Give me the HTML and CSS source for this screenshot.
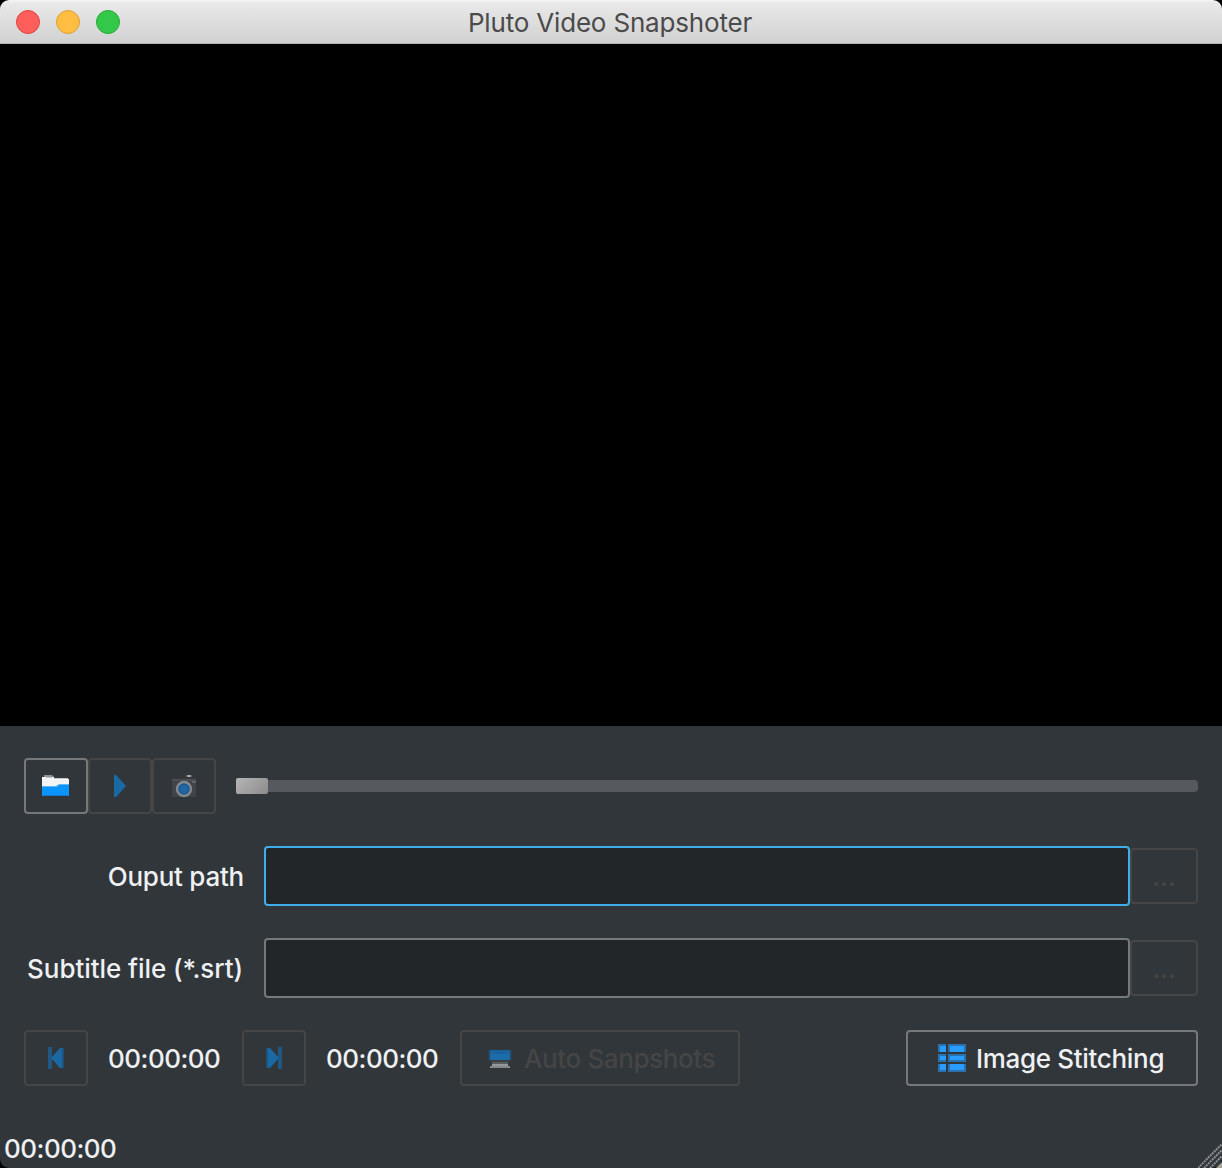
FILE: index.html
```html
<!DOCTYPE html>
<html lang="en">
<head>
<meta charset="utf-8">
<title>Pluto Video Snapshoter</title>
<link rel="stylesheet" href="styles.css">
</head>
<body>
<div class="window">
  <header class="titlebar">
    <div class="lights"><span class="light close"></span><span class="light minimize"></span><span class="light maximize"></span></div>
    <h1 class="title">Pluto Video Snapshoter</h1>
  </header>
  <div class="video"></div>
  <main class="panel">
    <div class="row transport">
      <button class="btn tool enabled" aria-label="Open">
        <svg class="folder" width="28" height="24" viewBox="0 0 28 24">
          <path fill="#8f9294" d="M2 1h8l2 2H2z"/><path fill="#f4f4f4" d="M0 3h12v2h15v8H0z"/><path fill="#c4c6c8" d="M4 3h6v1H4zM12 4h14v1H12z"/>
          <path fill="#0b94fb" d="M0 13h14l2-2h11v11H0z"/><path fill="#65b6ef" d="M0 12h14l3-2h10v1H17l-2 2H0z"/><path fill="#1678c8" d="M1 21h25v1H1z"/>
        </svg>
      </button>
      <button class="btn tool" aria-label="Play">
        <svg width="14" height="24" viewBox="0 0 14 24"><path fill="#1b69a4" d="M1 1h2l10 11L3 23H1z"/></svg>
      </button>
      <button class="btn tool" aria-label="Snapshot">
        <svg width="28" height="26" viewBox="0 0 28 26">
          <path fill="#404347" d="M2 6h24v18H2z"/><path fill="#4b4e52" d="M2 6h24v2H2z"/><path fill="#34373b" d="M4 4h4v2H4zM14 2h10v4H14z"/>
          <path fill="#686b6e" d="M16 2h6v2h-6z"/><path fill="#bfc1c2" d="M18 2h2v2h-2z"/><path fill="#626568" d="M22 8h4v2h-4z"/>
          <circle cx="14" cy="16" r="7" fill="#1c5b91" stroke="#85898b" stroke-width="2.4"/><circle cx="14" cy="16" r="4.2" fill="#2066a2"/>
        </svg>
      </button>
      <div class="slider"><span class="handle"></span></div>
    </div>
    <div class="row field">
      <label class="label path-label" for="out">Ouput path</label>
      <input class="input focused" id="out"><button class="btn browse"><span>...</span></button>
    </div>
    <div class="row field">
      <label class="label sub-label" for="sub">Subtitle file (*.srt)</label>
      <input class="input" id="sub"><button class="btn browse"><span>...</span></button>
    </div>
    <div class="row actions">
      <button class="btn tool" aria-label="Start">
        <svg width="16" height="24" viewBox="0 0 16 24"><path fill="#205783" d="M0 1h4v22H0z"/><path fill="#1b69a4" d="M3 12 12 2h2v20h-2z"/><path fill="#1f517a" d="M14 2h2v20h-2z"/></svg>
      </button>
      <span class="time">00:00:00</span>
      <button class="btn tool" aria-label="End">
        <svg width="16" height="24" viewBox="0 0 16 24"><path fill="#205783" d="M12 1h4v22h-4z"/><path fill="#1b69a4" d="M13 12 4 2H2v20h2z"/><path fill="#1f517a" d="M0 2h2v20H0z"/></svg>
      </button>
      <span class="time">00:00:00</span>
      <button class="btn auto">
        <svg width="24" height="24" viewBox="0 0 24 24" shape-rendering="crispEdges">
          <path fill="#2b435a" d="M0 4h24v10H0z"/><path fill="#1b63a0" d="M2 4h20v6H2z"/><path fill="#1c6eaa" d="M2 8h20v6H2z"/><path fill="#3b3e42" d="M2 14h20v2H2z"/><path fill="#595c5f" d="M4 16h16v2H4z"/><path fill="#96999b" d="M4 18h16v2H4z"/><path fill="#85888a" d="M2 20h20v2H2z"/>
        </svg>
        <span class="auto-text">Auto Sanpshots</span>
      </button>
      <button class="btn enabled stitch">
        <svg width="28" height="28" viewBox="0 0 28 28" shape-rendering="crispEdges">
          <path fill="#2b71af" d="M0 0h8v8H0zM10 0h18v8H10zM0 10h8v8H0zM10 10h18v8H10zM0 20h8v8H0zM10 20h18v8H10z"/>
          <path fill="#299cff" d="M2 2h6v6H2zM12 2h14v6H12zM2 12h6v4H2zM12 12h14v4H12zM2 20h6v6H2zM12 20h14v6H12z"/>
        </svg>
        <span class="stitch-text">Image Stitching</span>
      </button>
    </div>
    <footer class="status"><span>00:00:00</span></footer>
    <svg class="grip" width="24" height="24" viewBox="0 0 24 24"><g stroke="#8d9091" stroke-width="2" stroke-dasharray="2 .83"><path d="M0 24 24 0M6 24 24 6M12 24 24 12"/></g><path fill="#a9a398" d="m18 24 6-6v6z"/></svg>
  </main>
</div>
</body>
</html>
```
FILE: styles.css
```css
* { box-sizing: border-box; }
body { margin: 0; background: #000; font-family: Inter, "Liberation Sans", sans-serif; font-size: 26px; line-height: 32px; color: #eff0f1; }
.window { width: 1222px; height: 1168px; display: flex; flex-direction: column; overflow: hidden; }
.titlebar { height: 44px; display: grid; grid-template-columns: 1fr auto 1fr; align-items: center; padding: 0 18px 0 16px; border-radius: 9px 9px 0 0; border-bottom: 1px solid #b2b2b2; background: linear-gradient(#f5f5f5, #e9e9e9 3px, #d1d1d1); }
.lights { display: flex; gap: 16px; }
.light { width: 24px; height: 24px; border-radius: 50%; border: 1px solid; }
.close { background: #ff5f5b; border-color: #e2443f; }
.minimize { background: #ffbe41; border-color: #dfa035; }
.maximize { background: #34c84a; border-color: #24ab36; }
.title { margin: 0; padding-top: 2px; font-size: 26px; font-weight: 400; line-height: 32px; letter-spacing: -.18px; color: #4b4b4b; white-space: nowrap; }
.video { height: 682px; background: #000; }
.panel { position: relative; flex: 1; display: flex; flex-direction: column; gap: 32px; padding: 32px 24px 0; background: #31363b; border-radius: 0 0 9px 9px; font-weight: 450; }
.row { display: flex; align-items: center; }
.btn { display: flex; align-items: center; justify-content: center; height: 56px; padding: 0; border: 2px solid #454545; border-radius: 4px; background: transparent; color: #454545; font: inherit; white-space: nowrap; flex: none; }
.enabled { border-color: #76797c; color: #eff0f1; }
.tool { width: 64px; }
.btn svg { display: block; flex: none; }
.slider { flex: 1; height: 12px; margin-left: 20px; border-radius: 4px; background: #565a5e; display: flex; align-items: center; }
.handle { width: 32px; height: 16px; flex: none; border-radius: 2px; background: linear-gradient(135deg, #b5b5b5, #8c8c8c); }
.label { width: 220px; padding-top: 2px; text-align: right; white-space: nowrap; }
.path-label { letter-spacing: -.24px; }
.sub-label { padding-right: 1px; letter-spacing: -.06px; }
.input { flex: 1; min-width: 0; height: 60px; margin-left: 20px; padding: 0 10px; border: 2px solid #76797c; border-radius: 4px; background: #232629; color: inherit; font: inherit; outline: 0; }
.focused { border-color: #3daee9; }
.browse { width: 68px; }
.browse span { padding-top: 2px; }
.time { width: 114px; margin: 0 20px; padding-top: 2px; letter-spacing: -.52px; white-space: nowrap; }
.auto { width: 280px; justify-content: flex-start; padding-left: 26px; gap: 12px; }
.auto-text { padding-top: 2px; letter-spacing: -.38px; }
.stitch { width: 292px; margin-left: auto; justify-content: flex-start; padding-left: 30px; gap: 10px; }
.stitch-text { padding-top: 2px; letter-spacing: -.32px; }
.status { margin: 15px -20px 0; letter-spacing: -.52px; white-space: nowrap; }
.grip { position: absolute; right: 0; bottom: 0; }
```
